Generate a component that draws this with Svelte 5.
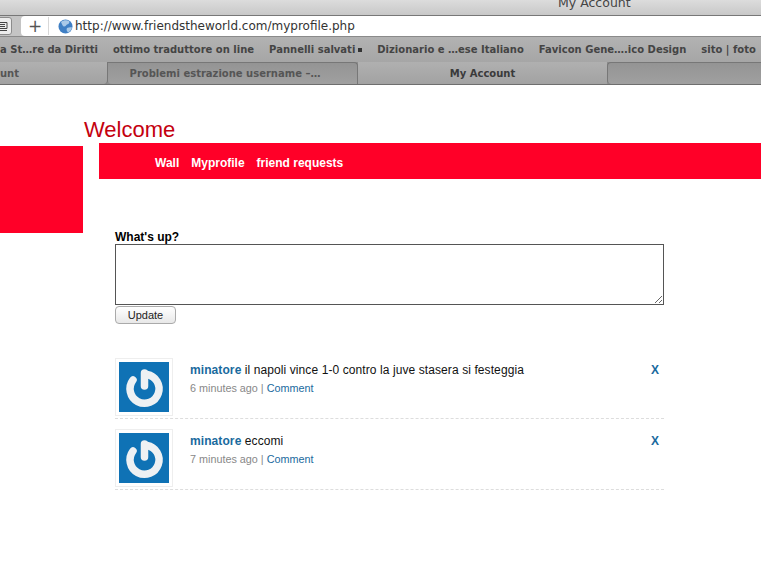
<script>
  const bookmarks = [
    'a St…re da Diritti',
    'ottimo traduttore on line',
    'Pannelli salvati',
    'Dizionario e …ese Italiano',
    'Favicon Gene….ico Design',
    'sito | foto'
  ];

  const posts = [
    { user: 'minatore', text: 'il napoli vince 1-0 contro la juve stasera si festeggia', ago: '6 minutes ago' },
    { user: 'minatore', text: 'eccomi', ago: '7 minutes ago' }
  ];
</script>

<div class="browser">
  <div class="titlebar"><span>My Account</span></div>

  <div class="toolbar">
    <div class="reader">
      <svg width="10" height="11" viewBox="0 0 10 11"><path d="M-1 1.500h8v6h-8zM0 3.500h5M0 5.500h5M-1 9.500h8" fill="none" stroke="#444" /></svg>
    </div>
    <div class="address">
      <span class="plus">+</span>
      <svg class="globe" width="15" height="15" viewBox="0 0 15 15">
        <circle cx="7.500" cy="7.500" r="7" fill="#3f7fc4" />
        <path d="M3 3c2-2 6-2.500 8-1 1 1 0 3-2 3.500-1 .5-1 2-3 2-1 0-2-2-3-4.500zM9 9c2-1 4-1 5-.5-.5 2.500-2 4-4 5-1-1-2-3-1-4.500z" fill="#a9c9e8" />
      </svg>
      <span class="url">http://www.friendstheworld.com/myprofile.php</span>
    </div>
  </div>

  <div class="bookmarks">
    {#each bookmarks as b, i}
      <span class="bookmark">{b}{#if i === 2}<i class="more"></i>{/if}</span>
    {/each}
  </div>

  <div class="tabs">
    <div class="tab first">unt</div>
    <div class="tab second">Problemi estrazione username –…</div>
    <div class="tab active">My Account</div>
    <div class="tab last"></div>
  </div>
</div>

<div class="page">
  <h1>Welcome</h1>

  <div class="band">
    <div class="sidebar"></div>
    <div class="content">
      <nav>
        <a href="#wall">Wall</a>
        <a href="#profile">Myprofile</a>
        <a href="#requests">friend requests</a>
      </nav>

      <form class="status">
        <label for="status">What's up?</label>
        <textarea id="status"></textarea>
        <button type="button">Update</button>
      </form>

      <ul class="feed">
        {#each posts as post}
          <li>
            <div class="avatar">
              <svg width="50" height="50" viewBox="0 0 50 50">
                <rect width="50" height="50" fill="#0f72b5" />
                <path d="M14 18A14.500 14.500 0 1 0 28 12.500" fill="none" stroke="#eef1f3" stroke-width="7.500" stroke-linecap="round" />
                <path d="M25.500 11V24" fill="none" stroke="#eef1f3" stroke-width="7.500" stroke-linecap="round" />
              </svg>
            </div>
            <div class="body">
              <p class="line"><a class="user" href="#user">{post.user}</a> {post.text}</p>
              <p class="meta">{post.ago} | <a href="#comment">Comment</a></p>
            </div>
            <a class="remove" href="#remove">X</a>
          </li>
        {/each}
      </ul>
    </div>
  </div>
</div>

<style>
  :global(body) {
    background: #fff;
    overflow: hidden;
  }

  .browser {
    font-family: "DejaVu Sans", sans-serif;
    height: 85px;
    overflow: hidden;
    border-bottom: 1px solid #6e6e6e;
    box-sizing: border-box;
  }

  .titlebar {
    height: 16px;
    background: linear-gradient(#dcdcdc, #c8c8c8);
    border-bottom: 1px solid #777;
    box-sizing: border-box;
    overflow: hidden;
    color: #444;
    font-size: 12.500px;
  }

  .titlebar span {
    display: block;
    margin-left: 558px;
    margin-top: -5px;
  }

  .toolbar {
    height: 21px;
    background: #c4c4c4;
    display: flex;
    gap: 9px;
    align-items: center;
    border-bottom: 1px solid #8a8a8a;
    box-sizing: border-box;
  }

  .reader {
    width: 13px;
    height: 18px;
    margin-left: -1px;
    background: #ececec;
    border: 1px solid #8c8c8c;
    border-radius: 0 3px 3px 0;
    box-sizing: border-box;
    display: flex;
    align-items: center;
    overflow: hidden;
  }

  .address {
    flex: 1;
    height: 20px;
    background: #fff;
    border-radius: 4px 0 0 4px;
    display: flex;
    align-items: center;
  }

  .plus {
    width: 26px;
    text-align: center;
    font-size: 17px;
    color: #555;
    border-right: 1px solid #d8d8d8;
    line-height: 18px;
    margin-left: 1px;
  }

  .globe {
    margin-left: 9px;
    margin-right: 2px;
  }

  .url {
    font-size: 12px;
    color: #333;
    white-space: nowrap;
  }

  .bookmarks {
    height: 25px;
    background: linear-gradient(#b2b2b2, #a6a6a6);
    display: flex;
    align-items: center;
    gap: 15px;
    color: #444;
    font-size: 10px;
    font-weight: bold;
    white-space: nowrap;
    padding-bottom: 1px;
    box-sizing: border-box;
  }

  .more {
    display: inline-block;
    width: 4px;
    height: 4px;
    background: #333;
    margin-left: 3px;
    vertical-align: 1px;
  }

  .tabs {
    height: 22px;
    display: flex;
    background: #8e8e8e;
    color: #555;
    font-size: 10px;
    font-weight: bold;
    white-space: nowrap;
  }

  .tab {
    box-sizing: border-box;
    display: flex;
    align-items: center;
    justify-content: center;
  }

  .first {
    width: 108px;
    background: linear-gradient(#b0b0b0, #a2a2a2);
    justify-content: flex-start;
    border-right: 1px solid #777;
    border-bottom-right-radius: 4px;
  }

  .second {
    width: 250px;
    background: linear-gradient(#949494, #a0a0a0);
    border-top: 1px solid #777;
    border-right: 1px solid #777;
    border-radius: 0 4px 0 4px;
    padding-right: 15px;
  }

  .active {
    width: 249px;
    background: linear-gradient(#b0b0b0, #a2a2a2);
    color: #3a3a3a;
  }

  .last {
    flex: 1;
    background: linear-gradient(#949494, #a0a0a0);
    border-top: 1px solid #777;
    border-left: 1px solid #777;
    border-radius: 4px 0 0 4px;
  }

  .page {
    font-family: "Liberation Sans", Arial, sans-serif;
    color: #111;
  }

  h1 {
    margin: 32px 0 0 84px;
    padding-bottom: 1px;
    font-size: 22px;
    font-weight: normal;
    line-height: 25px;
    color: #c4000f;
  }

  .band {
    display: flex;
    align-items: flex-start;
    gap: 16px;
  }

  .sidebar {
    width: 83px;
    height: 87px;
    margin-top: 3px;
    flex: none;
    background: #ff0028;
  }

  .content {
    flex: 1;
    min-width: 0;
  }

  nav {
    height: 36px;
    background: #ff0028;
    display: flex;
    align-items: center;
    gap: 12px;
    padding: 3px 0 0 56px;
    box-sizing: border-box;
  }

  nav a {
    color: #fff;
    font-size: 12px;
    font-weight: bold;
    text-decoration: none;
  }

  .status {
    margin: 51px 0 0 16px;
    width: 549px;
  }

  label {
    display: block;
    font-size: 12px;
    font-weight: bold;
    line-height: 14px;
    color: #000;
  }

  textarea {
    display: block;
    width: 100%;
    height: 61px;
    box-sizing: border-box;
    border: 1px solid #555;
    margin: 0;
    border-radius: 0;
    background: #fff;
  }

  button {
    display: block;
    margin-top: 1px;
    width: 61px;
    height: 18px;
    padding: 0;
    border: 1px solid #aaa;
    border-radius: 4px;
    background: linear-gradient(#fff, #e8e8e8);
    font-family: inherit;
    font-size: 11px;
    color: #222;
  }

  .feed {
    list-style: none;
    margin: 34px 0 0 16px;
    padding: 0;
    width: 549px;
  }

  .feed li {
    display: flex;
    height: 58px;
    padding-bottom: 2px;
    margin-bottom: 10px;
    border-bottom: 1px dashed #ddd;
  }

  .avatar {
    width: 58px;
    height: 58px;
    box-sizing: border-box;
    padding: 3px;
    border: 1px solid #eee;
    flex: none;
  }

  .avatar svg {
    display: block;
  }

  .body {
    flex: 1;
    margin-left: 17px;
    padding-top: 5px;
  }

  .line {
    margin: 0;
    font-size: 12px;
    line-height: 14px;
    letter-spacing: 0.09px;
  }

  .user {
    color: #1a6a9e;
    font-weight: bold;
    text-decoration: none;
  }

  .meta {
    margin: 4px 0 0;
    font-size: 10.800px;
    line-height: 14px;
    color: #888;
  }

  .meta a {
    color: #1a6a9e;
    text-decoration: none;
  }

  .remove {
    margin: 5px 5px 0 0;
    color: #1a6a9e;
    font-size: 12px;
    font-weight: bold;
    line-height: 14px;
    text-decoration: none;
  }
</style>
